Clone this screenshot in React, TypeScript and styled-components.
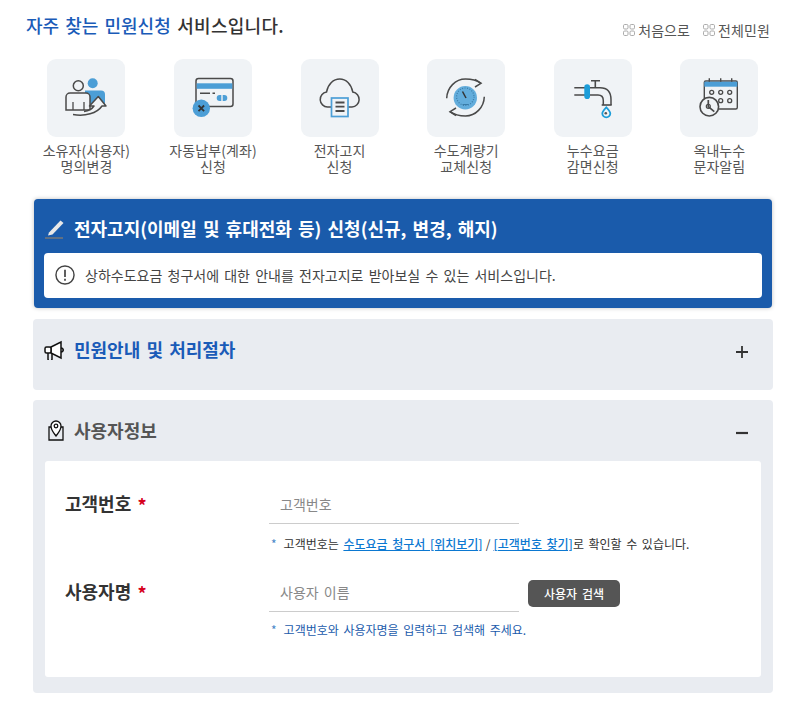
import React from 'react';
import styled, { createGlobalStyle } from 'styled-components';

const Global = createGlobalStyle`
  html, body { margin: 0; padding: 0; background: #fff; }
  body { font-family: "Noto Sans CJK KR", "Noto Sans", sans-serif; color: #333; word-spacing: 0.13em; }
  * { box-sizing: border-box; }
`;
const Page = styled.div`
  width: 804px; height: 702px; overflow: hidden;
  padding: 11px 31px 0 33px;
`;
const Header = styled.div`
  display: flex; justify-content: space-between; margin: 0 3px 0 -7px; height: 32px;
`;
const Title = styled.h2`
  margin: 0; font-size: 18px; line-height: 28px; font-weight: 500; color: #333; letter-spacing: 0.3px;
  span { color: #1a5bb8; letter-spacing: 0; }
`;
const QuickLinks = styled.div`
  display: flex; gap: 13px; padding-top: 6px;
`;
const QuickLink = styled.a`
  display: flex; align-items: center; gap: 3px; font-size: 14px; line-height: 20px; color: #555; letter-spacing: 0.1px;
`;
const Services = styled.div`
  display: grid; grid-template-columns: repeat(6, 126.6px); margin: 16px 0 0 -9.9px; height: 140px;
`;
const Service = styled.div`
  display: flex; flex-direction: column; align-items: center;
`;
const Tile = styled.div`
  width: 78px; height: 78px; border-radius: 9px; background: #f0f3f6;
  display: flex; align-items: center; justify-content: center;
`;
const ServiceLabel = styled.div`
  margin-top: 6px; font-size: 14px; line-height: 15.5px; color: #555; text-align: center; letter-spacing: 0.1px;
`;
const BluePanel = styled.section`
  margin: 0 1px; background: #1a5bab; border-radius: 4px; padding: 7px 10px 10px;
  box-shadow: 0 0 4px rgba(0,0,0,.25); height: 109px;
`;
const PanelHead = styled.div<{ $color: string }>`
  display: flex; align-items: center; gap: 8px; height: 44px; color: ${p => p.$color};
  font-size: 18px; font-weight: 700;
  svg { flex: none; }
`;
const Notice = styled.div`
  height: 45px; margin-top: 3px; padding: 0 11px 2px; background: #fff; border-radius: 4px; display: flex; align-items: center; gap: 10px;
  font-size: 14px; color: #444;
`;
const GreyPanel = styled.section<{ $h: number; $gap: number }>`
  margin-top: ${p => p.$gap}px; height: ${p => p.$h}px; background: #e9ecf1; border-radius: 4px; padding: 8px 11px 16px 11px;
  position: relative;
`;
const Toggle = styled.svg`
  position: absolute; right: 24px; top: 26px;
`;
const Card = styled.div`
  background: #fff; border-radius: 3px; height: 216px; margin: 9px 1px 0; padding: 22px 20px 0;
`;
const FieldRow = styled.div`
  display: grid; grid-template-columns: 204px 1fr; height: 88px;
`;
const FieldLabel = styled.label`
  font-size: 18px; line-height: 26px; font-weight: 700; color: #333; padding-top: 7px;
  b { color: #d6001c; margin-left: 0; font-weight: 700; font-size: 18px; position: relative; top: 2px; }
`;
const InputRow = styled.div`
  display: flex; align-items: center; gap: 9px;
`;
const FakeInput = styled.div`
  width: 250px; height: 41px; border-bottom: 1px solid #ccc; padding: 0 11px; font-size: 14px; line-height: 43px; color: #888;
`;
const SearchButton = styled.button`
  width: 92px; height: 27px; margin-top: 4px; border: 0; border-radius: 5px; background: #555; color: #fff; font-family: inherit;
  font-size: 12px; font-weight: 500; padding: 0; word-spacing: inherit;
`;
const Hint = styled.p<{ $blue?: boolean }>`
  margin: ${p => (p.$blue ? '10px' : '12px')} 0 0 2px; font-size: 12px; line-height: 16px; word-spacing: 1.9px; color: ${p => (p.$blue ? '#1a5bab' : '#333')};
  i { font-style: normal; color: #4a86c8; margin-right: 7px; }
  a { color: #0b78d1; text-decoration: underline; font-weight: 500; }
`;
const Slash = styled.span`
  word-spacing: 0.4px;
`;

const grid = () => (
  <svg width="12" height="12" viewBox="0 0 12 12" fill="none" stroke="#aaa" strokeWidth="1">
    <rect x=".5" y=".5" width="4.5" height="4.5" rx="1.2" /><rect x="7" y=".5" width="4.5" height="4.5" rx="1.2" />
    <rect x=".5" y="7" width="4.5" height="4.5" rx="1.2" /><rect x="7" y="7" width="4.5" height="4.5" rx="1.2" />
  </svg>
);

const d = '#4a4a4a', b = '#4c9ed6', t = '#f0f3f6';
const icons = [
  <svg width="44" height="44" viewBox="0 0 44 44" fill="none">
    <circle cx="28.700" cy="7.300" r="5" fill={b} />
    <path d="M21 14.500h16a4 4 0 0 1 4 4V29H21z" fill={b} />
    <circle cx="14.300" cy="9.700" r="5" fill={t} stroke={d} strokeWidth="1.500" />
    <path d="M2 34V21a4 4 0 0 1 4-4h16a4 4 0 0 1 4 4v13z" fill={t} stroke={d} strokeWidth="1.500" />
    <path d="M9 26v8M20 26v8" stroke={d} strokeWidth="1.300" />
    <path d="M9 38.500c12 2 24-1 29-8.500h4l-7.700-9.500L25.500 30H30c-2 3-6 5-10 5.500" fill={t} stroke={d} strokeWidth="1.500" strokeLinejoin="round" />
  </svg>,
  <svg width="44" height="44" viewBox="0 0 44 44" fill="none">
    <rect x="5" y="2.500" width="37" height="28" rx="2.500" fill={t} stroke={d} strokeWidth="1.500" />
    <rect x="5.700" y="7.300" width="35.600" height="5.500" fill={b} />
    <path d="M9 17.300h10M21.500 17.300h2.500" stroke={d} strokeWidth="1.500" />
    <rect x="25.700" y="19" width="10.600" height="6" rx="3" fill={b} /><rect x="30.300" y="19" width="1.400" height="6" fill={t} />
    <circle cx="10.300" cy="32.300" r="8.700" fill={b} />
    <path d="M7.500 29.500l5.600 5.600M13.100 29.500l-5.600 5.600" stroke="#333" strokeWidth="1.800" />
  </svg>,
  <svg width="44" height="44" viewBox="0 0 44 44" fill="none">
    <path d="M13 31H9.500a7.500 7.500 0 0 1-1-14.900C10 8 15.500 3 21.700 3S33.300 8 34.800 16.100A7.500 7.500 0 0 1 34 31h-4" stroke={d} strokeWidth="1.500" />
    <rect x="13.500" y="22" width="16.500" height="18.500" fill={t} stroke={b} strokeWidth="1.700" />
    <path d="M17.500 26.500h9M17.500 30.700h9M17.500 35h9" stroke={d} strokeWidth="1.800" />
  </svg>,
  <svg width="44" height="44" viewBox="0 0 44 44" fill="none">
    <path d="M2.700 22.300C3 11.500 11.500 3 21.500 3c6 0 11.500 1.500 15.500 4.300" stroke={d} strokeWidth="1.500" />
    <path d="M31 3.300l6 4-6 3.700" stroke={d} strokeWidth="1.500" />
    <path d="M40.300 20.700C40 31.500 31.500 40 21.500 40c-6 0-11.500-1.500-15.500-4.300" stroke={d} strokeWidth="1.500" />
    <path d="M12 39.700l-6-4 6-3.700" stroke={d} strokeWidth="1.500" />
    <circle cx="21.300" cy="21.700" r="11.700" fill="#63addc" />
    <circle cx="21.300" cy="20.700" r="8.700" fill="none" stroke="#3a7ca8" strokeWidth="1.200" strokeDasharray="1 1.500" />
    <path d="M18.500 15.500l3.500 6.500" stroke="#333" strokeWidth="1.500" />
    <path d="M18.500 28.500h6" stroke="#3a7ca8" strokeWidth="1" />
  </svg>,
  <svg width="44" height="44" viewBox="0 0 44 44" fill="none">
    <path d="M3.300 11.700H16M3.300 19H16M18 11.700h11c7 0 11 4 11 12V29M18 19h9c3.500 0 5.300 2 5.300 5.500V29" stroke={d} strokeWidth="1.500" />
    <path d="M20 4.700h9M24.300 4.700v7" stroke={d} strokeWidth="1.600" />
    <path d="M30.700 29h10" stroke={d} strokeWidth="1.600" />
    <rect x="13.300" y="8.300" width="5.700" height="14.700" rx="2.800" fill="#1c9dd9" />
    <path d="M35.300 31.300c2.800 3 4 4.500 4 6a4 4 0 0 1-8 0c0-1.500 1.200-3 4-6z" fill={t} stroke="#1c9dd9" strokeWidth="1.800" />
    <circle cx="34.800" cy="37.300" r="1.300" fill="#555" />
  </svg>,
  <svg width="44" height="44" viewBox="0 0 44 44" fill="none">
    <rect x="7.300" y="5" width="33" height="28" rx="1.500" fill={t} stroke={d} strokeWidth="1.400" />
    <rect x="7.300" y="5.700" width="33" height="5" fill={b} />
    <path d="M12.300 2.300v3.400M23.700 2.300v3.400M34.700 2.300v3.400" stroke={d} strokeWidth="1.400" />
    {[[14.700, 16.300], [23.700, 16.300], [32.700, 16.300], [23.700, 24.700], [32.700, 24.700]].map(([x, y]) => <circle key={`${x}${y}`} cx={x} cy={y} r="2" stroke={d} strokeWidth="1.300" />)}
    <circle cx="12.300" cy="30.700" r="9.300" fill={t} stroke={d} strokeWidth="1.600" />
    <path d="M11.300 24v6.700l6 5" stroke={d} strokeWidth="1.700" />
    <circle cx="11.300" cy="30.300" r="2" stroke={d} strokeWidth="1.200" />
  </svg>,
];

const services = [
  ['소유자(사용자)', '명의변경'], ['자동납부(계좌)', '신청'], ['전자고지', '신청'],
  ['수도계량기', '교체신청'], ['누수요금', '감면신청'], ['옥내누수', '문자알림'],
];

export default function App() {
  return (
    <Page>
      <Global />
      <Header>
        <Title><span>자주 찾는 민원신청</span> 서비스입니다.</Title>
        <QuickLinks>
          <QuickLink>{grid()}처음으로</QuickLink>
          <QuickLink>{grid()}전체민원</QuickLink>
        </QuickLinks>
      </Header>
      <Services>
        {services.map((s, i) => (
          <Service key={s[0]}>
            <Tile>{icons[i]}</Tile>
            <ServiceLabel>{s[0]}<br />{s[1]}</ServiceLabel>
          </Service>
        ))}
      </Services>
      <BluePanel>
        <PanelHead $color="#fff">
          <svg width="22" height="22" viewBox="0 0 22 22" fill="none">
            <path d="M5 15.500L16.500 3.500l3 2.500L8.500 17.500l-4.500 1z" fill="#e8e8e8" />
            <path d="M1 21h18" stroke="#777" strokeWidth="1.500" />
          </svg>
          전자고지(이메일 및 휴대전화 등) 신청(신규, 변경, 해지)
        </PanelHead>
        <Notice>
          <svg width="20" height="20" viewBox="0 0 21 21" fill="none" stroke="#444">
            <circle cx="10.500" cy="10.500" r="9.500" strokeWidth="1.500" />
            <path d="M10.500 5v7.500" strokeWidth="1.800" /><path d="M10.500 14.500v2" strokeWidth="1.800" />
          </svg>
          상하수도요금 청구서에 대한 안내를 전자고지로 받아보실 수 있는 서비스입니다.
        </Notice>
      </BluePanel>
      <GreyPanel $h={71} $gap={11}>
        <PanelHead $color="#1a5bb8">
          <svg width="22" height="22" viewBox="0 -2 22 22" fill="none" stroke="#111" strokeWidth="1.500">
            <path d="M7 7L17 2v16L7 13z" fill="#fff" /><rect x="1" y="7" width="6" height="6" rx="1.500" fill="#fff" />
            <path d="M4 13v6a1.500 1.500 0 0 0 4 0v-6M17 8c3 .5 3 3.500 0 4" />
          </svg>
          민원안내 및 처리절차
        </PanelHead>
        <Toggle width="14" height="14" viewBox="0 0 14 14" stroke="#333" strokeWidth="1.800"><path d="M1 7h12M7 1v12" /></Toggle>
      </GreyPanel>
      <GreyPanel $h={293} $gap={10}>
        <PanelHead $color="#555">
          <svg width="22" height="24" viewBox="0 0 22 24" fill="none" stroke="#111" strokeWidth="1.300">
            <path d="M8 9H5v13h14V9h-3" />
            <path d="M12 18c-3-4-5-6-5-10a5 5 0 0 1 10 0c0 4-2 6-5 10z" fill="#fff" />
            <circle cx="12" cy="8" r="1.800" />
          </svg>
          사용자정보
        </PanelHead>
        <Toggle width="14" height="14" viewBox="0 0 14 14" stroke="#333" strokeWidth="2.200"><path d="M1 7h12" /></Toggle>
        <Card>
          <FieldRow>
            <FieldLabel>고객번호 <b>*</b></FieldLabel>
            <div>
              <InputRow><FakeInput>고객번호</FakeInput></InputRow>
              <Hint><i>*</i>고객번호는 <a>수도요금 청구서 [위치보기]</a><Slash> / </Slash><a>[고객번호 찾기]</a>로 확인할 수 있습니다.</Hint>
            </div>
          </FieldRow>
          <FieldRow>
            <FieldLabel>사용자명 <b>*</b></FieldLabel>
            <div>
              <InputRow><FakeInput>사용자 이름</FakeInput><SearchButton>사용자 검색</SearchButton></InputRow>
              <Hint $blue><i>*</i>고객번호와 사용자명을 입력하고 검색해 주세요.</Hint>
            </div>
          </FieldRow>
        </Card>
      </GreyPanel>
    </Page>
  );
}
